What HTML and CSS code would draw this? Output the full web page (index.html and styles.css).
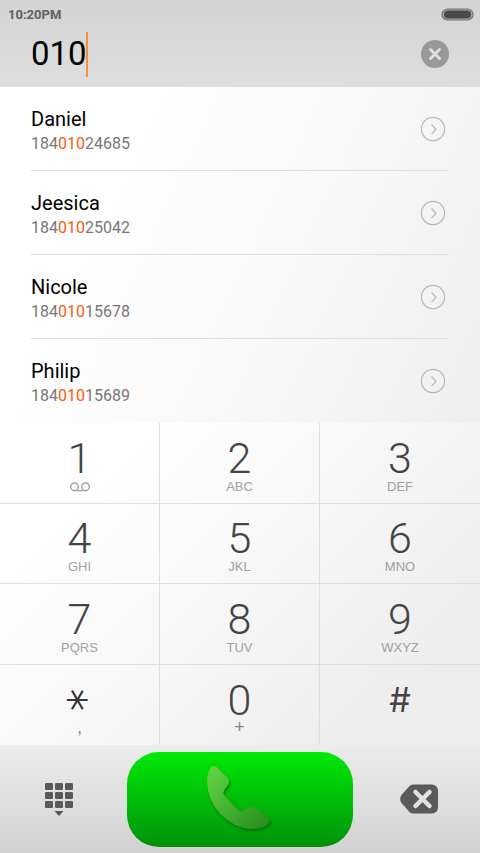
FILE: index.html
```html
<!DOCTYPE html>
<html lang="en">
<head>
<meta charset="utf-8">
<meta name="viewport" content="width=device-width, initial-scale=1">
<title>Dialer</title>
<link rel="stylesheet" href="styles.css">
</head>
<body>
<header class="top">
  <div class="status">
    <span>10:20PM</span>
    <svg class="battery" viewBox="0 0 33 13" role="img" aria-label="Battery"><rect x="1" y="1" width="31" height="11" rx="5.5" fill="#a8a8a8" stroke="#707070" stroke-width="1.2"/><rect x="3" y="2.5" width="27" height="8" rx="4" fill="#4a4a4a"/></svg>
  </div>
  <div class="entry">
    <div class="field"><input type="tel" value="010" aria-label="Number"><i class="caret"></i></div>
    <button class="clear" type="button" aria-label="Clear"><svg viewBox="0 0 28 28"><circle cx="14" cy="14" r="14" fill="#999"/><path d="M9.5 9.5l9 9M18.5 9.5l-9 9" stroke="#dedede" stroke-width="3" stroke-linecap="round"/></svg></button>
  </div>
</header>
<ul class="list">
  <li><div><h2>Daniel</h2><p>184<b>010</b>24685</p></div><button type="button" aria-label="Daniel details"><svg viewBox="0 0 26 26"><circle cx="13" cy="13" r="11.6"/><path d="M11.5 8.500l4.500 4.800-4.500 4.800"/></svg></button></li>
  <li><div><h2>Jeesica</h2><p>184<b>010</b>25042</p></div><button type="button" aria-label="Jeesica details"><svg viewBox="0 0 26 26"><circle cx="13" cy="13" r="11.6"/><path d="M11.5 8.500l4.500 4.800-4.500 4.800"/></svg></button></li>
  <li><div><h2>Nicole</h2><p>184<b>010</b>15678</p></div><button type="button" aria-label="Nicole details"><svg viewBox="0 0 26 26"><circle cx="13" cy="13" r="11.6"/><path d="M11.5 8.500l4.500 4.800-4.500 4.800"/></svg></button></li>
  <li><div><h2>Philip</h2><p>184<b>010</b>15689</p></div><button type="button" aria-label="Philip details"><svg viewBox="0 0 26 26"><circle cx="13" cy="13" r="11.6"/><path d="M11.5 8.500l4.500 4.800-4.500 4.800"/></svg></button></li>
</ul>
<main class="pad">
  <button type="button"><span class="digit">1</span><svg class="voicemail" viewBox="0 0 20 10" role="img" aria-label="Voicemail"><circle cx="4.500" cy="4.800" r="3.800"/><circle cx="15.500" cy="4.800" r="3.800"/><path d="M4 8.600h12"/></svg></button>
  <button type="button"><span class="digit">2</span><small>ABC</small></button>
  <button type="button"><span class="digit">3</span><small>DEF</small></button>
  <button type="button"><span class="digit">4</span><small>GHI</small></button>
  <button type="button"><span class="digit">5</span><small>JKL</small></button>
  <button type="button"><span class="digit">6</span><small>MNO</small></button>
  <button type="button"><span class="digit">7</span><small>PQRS</small></button>
  <button type="button"><span class="digit">8</span><small>TUV</small></button>
  <button type="button"><span class="digit">9</span><small>WXYZ</small></button>
  <button type="button"><span class="digit star">∗</span><small class="mark">,</small></button>
  <button type="button"><span class="digit">0</span><small class="mark">+</small></button>
  <button type="button"><span class="digit hash">#</span><small></small></button>
</main>
<footer class="bar">
  <button class="hide" type="button" aria-label="Hide keypad"><svg class="grid" viewBox="0 0 28 33"><g fill="#5a5a5a"><rect width="8" height="7" rx="1.200"/><rect x="10" width="8" height="7" rx="1.200"/><rect x="20" width="8" height="7" rx="1.200"/><rect y="9" width="8" height="7" rx="1.200"/><rect x="10" y="9" width="8" height="7" rx="1.200"/><rect x="20" y="9" width="8" height="7" rx="1.200"/><rect y="18" width="8" height="7" rx="1.200"/><rect x="10" y="18" width="8" height="7" rx="1.200"/><rect x="20" y="18" width="8" height="7" rx="1.200"/><path d="M9.500 28h9L14 33z"/></g></svg></button>
  <button class="call" type="button" aria-label="Call"><svg viewBox="0 0 68 68"><defs><linearGradient id="g" x1="0" y1="0" x2="1" y2="1"><stop offset="0" stop-color="#64d748"/><stop offset="1" stop-color="#248a18"/></linearGradient></defs><path fill="url(#g)" d="M8 1Q10 1 12 3L22 13Q24.500 17 21.500 21Q17 26 17.500 28.500Q18 30 20 32L31 44Q34 47.500 37 46L43 42.500Q46 41 49 42.500L62 52Q65 54 64 57Q58 65 45 64Q28 63 14 49Q1 34 1 16Q1 8 5 2Q6 1 8 1z"/></svg></button>
  <button class="erase" type="button" aria-label="Backspace"><svg class="back" viewBox="0 0 38 30"><path d="M13 .5h19a6 6 0 0 1 6 6v17a6 6 0 0 1-6 6H13q-2 0-3.500-1.500l-8-9q-2.800-4 0-8l8-9Q11 .5 13 .5z" fill="#5a5a5a"/><path d="M15.500 8l14 14M29.500 8l-14 14" stroke="#e2e2e2" stroke-width="4.500" stroke-linecap="round"/></svg></button>
</footer>
</body>
</html>
```
FILE: styles.css
```css
* { box-sizing: border-box; }
body { margin: 0; min-height: 100vh; display: flex; flex-direction: column; font-family: Roboto, sans-serif; color: #000; background: #eee; }
button { border: 0; background: none; padding: 0; font: inherit; color: inherit; display: flex; align-items: center; justify-content: center; }
svg { display: block; fill: none; }
.top { background: linear-gradient(#d3d3d3, #dedede); padding-bottom: 7px; }
.status { display: flex; justify-content: space-between; align-items: center; height: 28px; padding: 0 6px 0 8px; font-size: 13px; font-weight: 700; color: #606060; }
.battery { width: 33px; height: 13px; }
.entry { display: flex; justify-content: space-between; align-items: center; height: 52px; padding: 0 31px; }
.field { display: flex; align-items: center; }
.field input { width: 55px; border: 0; padding: 0; background: none; font: 33px/50px Roboto, sans-serif; color: #000; outline: 0; }
.caret { width: 2px; height: 45px; background: #ff8b33; }
.clear svg { width: 28px; height: 28px; }
.list { list-style: none; margin: 0; padding: 0 31px; background: linear-gradient(115deg, #fff 25%, #efefef); }
.list li { display: flex; justify-content: space-between; align-items: center; height: 84px; border-bottom: 1px solid #dfdfdf; }
.list li:last-child { border-color: transparent; }
.list li div { padding-top: 4px; }
.list h2 { margin: 0; font-size: 20px; line-height: 26px; font-weight: 400; }
.list p { margin: 0; font-size: 16px; line-height: 24px; color: #777; }
.list b { font-weight: 400; color: #fa5a0c; }
.list svg { width: 26px; height: 26px; margin-right: 3px; stroke: #b8b8b8; stroke-width: 1.2; }
.pad { flex: 1; display: grid; grid-template-columns: repeat(3, 1fr); grid-auto-rows: 1fr; background: linear-gradient(135deg, #fff 20%, #ededed 85%); }
.pad button { flex-direction: column; min-height: 80px; padding-top: 6px; border: 0 solid #dedede; border-width: 0 1px 1px 0; }
.pad button:nth-child(3n) { border-right: 0; }
.pad button:nth-last-child(-n+3) { border-bottom: 0; }
.digit { font: 300 43px/42px Roboto, sans-serif; color: #444; }
.star { font-family: "DejaVu Sans", sans-serif; transform: rotate(90deg); -webkit-text-stroke: 1px #333; }
.hash { font-family: Inter, sans-serif; font-size: 34px; font-weight: 400; }
.pad small { font: 13px/16px "Liberation Sans", sans-serif; color: #a0a0a0; height: 16px; }
.pad .mark { font-size: 18px; line-height: 12px; color: #888; }
.voicemail { width: 20px; height: 16px; stroke: #a4a4a4; stroke-width: 1.4; }
.bar { display: grid; grid-template-columns: 1fr 47% 1fr; align-items: center; height: 108px; background: linear-gradient(#ececec, #d2d2d2); }
.hide { padding-right: 10px; }
.erase { padding-left: 6px; }
.grid { width: 28px; height: 33px; }
.back { width: 38px; height: 30px; }
.call { height: 95px; border-radius: 32px; background: linear-gradient(#00ea06, #00910a); }
.call svg { width: 68px; height: 68px; filter: drop-shadow(1px 2px 1px #05750b); }
```
